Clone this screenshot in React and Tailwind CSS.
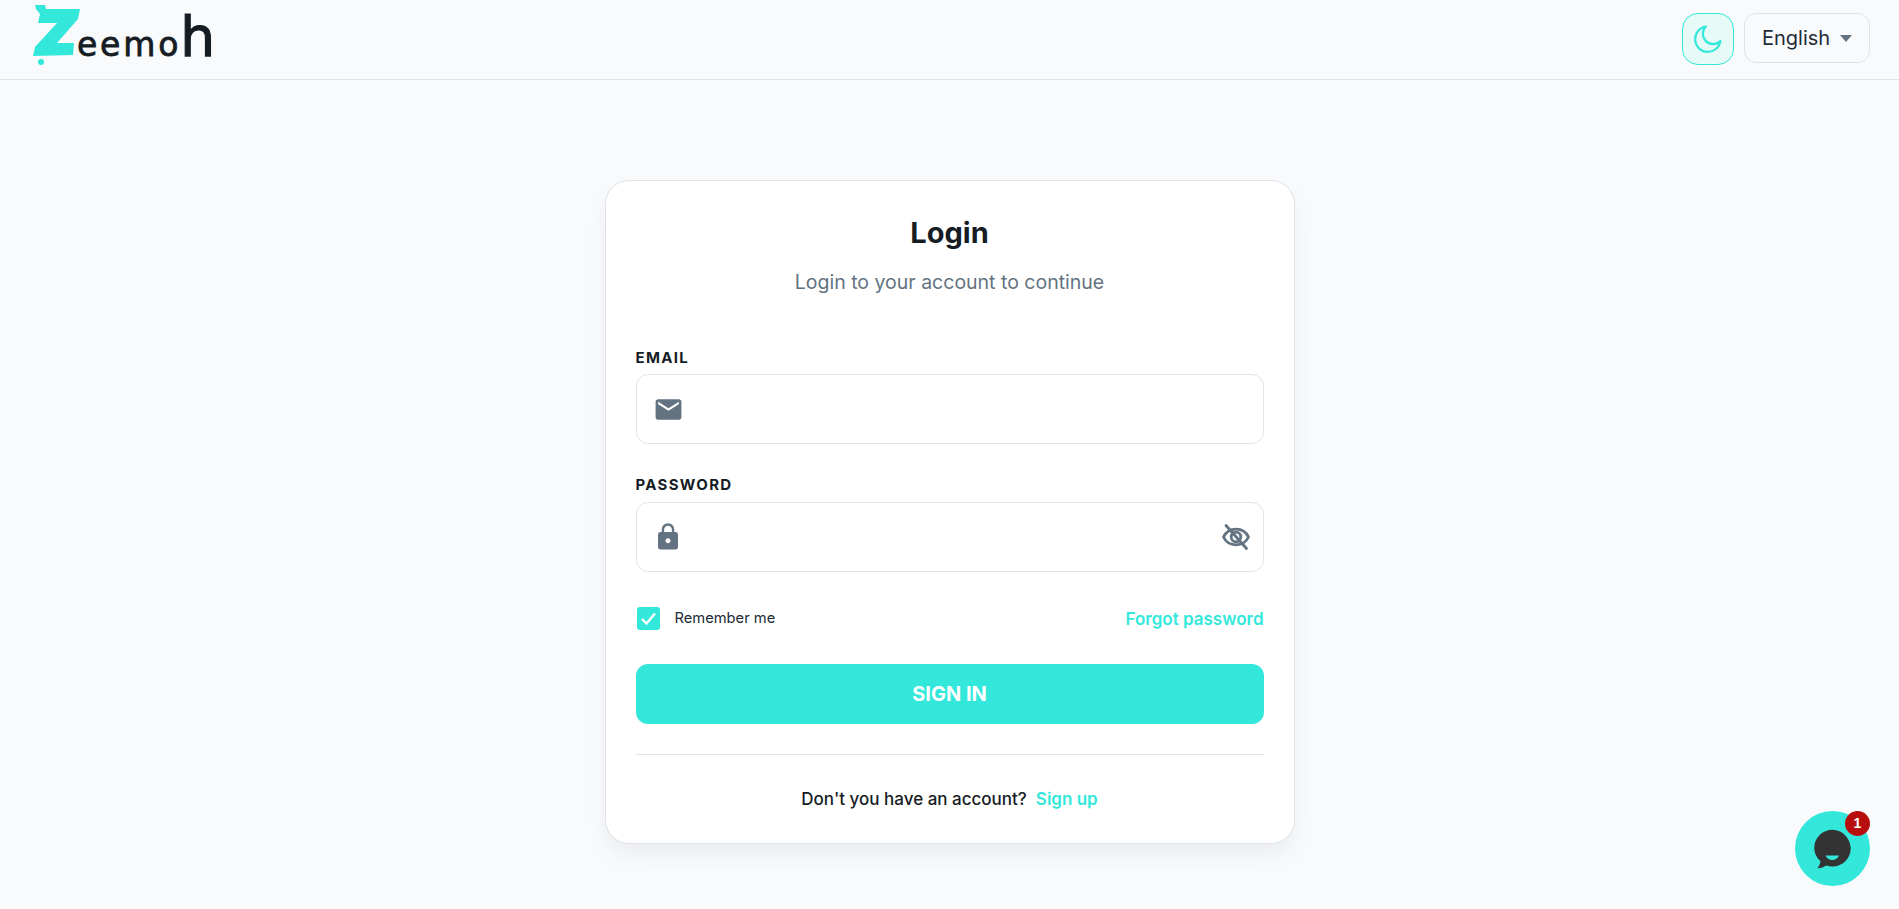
import React from "react";

const font = "font-['Inter','Liberation_Sans',sans-serif]";

function Logo() {
  return (
    <div className="flex items-start">
      <svg width="50" height="66" viewBox="32 3 50 66" className="mt-[3px] shrink-0">
        <polygon fill="#33E8DB" points="35,5 45,5 46,9 80,9 78,19 57,43 74,43 73,55 33,56 35,47 57,23 38,23 40,14 36,9" />
        <circle cx="41" cy="62" r="3" fill="#33E8DB" />
      </svg>
      <div className="flex items-baseline text-[#161c24] font-['DejaVu_Sans',sans-serif] h-[60px] ml-[-5px] mt-[7px]">
        <span className="text-[33px] leading-[60px] tracking-[2.8px] [-webkit-text-stroke:0.8px_#161c24]">eemo</span>
        <span className="text-[55px] leading-[60px] ml-[-1px] [-webkit-text-stroke:1.2px_#161c24]">h</span>
      </div>
    </div>
  );
}

function MailIcon() {
  return (
    <svg width="31" height="31" viewBox="0 0 24 24" fill="#637381">
      <path d="M20 4H4c-1.1 0-1.99.9-1.99 2L2 18c0 1.1.9 2 2 2h16c1.1 0 2-.9 2-2V6c0-1.1-.9-2-2-2zm0 4l-8 5-8-5V6l8 5 8-5v2z" />
    </svg>
  );
}

function LockIcon() {
  return (
    <svg width="30" height="30" viewBox="0 0 24 24" fill="#637381">
      <path d="M18 8h-1V6c0-2.76-2.24-5-5-5S7 3.24 7 6v2H6c-1.1 0-2 .9-2 2v10c0 1.1.9 2 2 2h12c1.1 0 2-.9 2-2V10c0-1.1-.9-2-2-2zm-6 9c-1.1 0-2-.9-2-2s.9-2 2-2 2 .9 2 2-.9 2-2 2zm3.1-9H8.9V6c0-1.71 1.39-3.1 3.1-3.1 1.71 0 3.1 1.39 3.1 3.1v2z" />
    </svg>
  );
}

function EyeOffIcon() {
  return (
    <svg width="30" height="30" viewBox="0 0 30 30" fill="none" stroke="#637381" strokeWidth="2.8" strokeLinecap="round">
      <path d="M2.5 15C5 9.8 9.6 7.2 15 7.2S25 9.8 27.5 15C25 20.2 20.4 22.8 15 22.8S5 20.2 2.5 15Z" />
      <circle cx="15" cy="15" r="4.8" />
      <path d="M5 3.5L25.5 26.5" />
    </svg>
  );
}

export default function App() {
  return (
    <div className={`${font} min-h-[909px] bg-[#f9fafb] text-[#161c24] relative`}>
      <header className="h-[80px] border-b border-[#dfe3e8] flex items-start justify-between pl-[32px] pr-[29px]">
        <Logo />
        <div className="flex items-start gap-[10px] pt-[13px]">
          <button className="w-[52px] h-[52px] rounded-[16px] border border-[#33e8db] bg-[#e6faf8] flex items-center justify-center">
            <svg width="34" height="34" viewBox="0 0 24 24" fill="none" stroke="#33e8db" strokeWidth="1.5" strokeLinejoin="round">
              <path d="M10.5 3.2a7 7 0 0 0 10.3 10.3 9 9 0 1 1-10.3-10.3Z" />
            </svg>
          </button>
          <button className="w-[126px] h-[50px] rounded-[12px] border border-[#dfe3e8] flex items-center pl-[17px] gap-[10px] text-[20px] text-[#212b36]">
            <span>English</span>
            <span className="w-0 h-0 border-l-[6.5px] border-r-[6.5px] border-t-[7px] border-l-transparent border-r-transparent border-t-[#637381]" />
          </button>
        </div>
      </header>

      <main className="flex justify-center pt-[100px]">
        <div className="w-[690px] bg-white border border-[#dfe3e8] rounded-[24px] shadow-[0_12px_24px_-4px_rgba(145,158,171,0.16)] px-[30px] pt-[35px] pb-[32px]">
          <h1 className="text-[29px] leading-[34px] font-bold text-center text-[#161c24]">Login</h1>
          <p className="mt-[19px] text-[19.5px] leading-[26px] text-center text-[#637381]">Login to your account to continue</p>

          <label className="block mt-[53px] mb-[6px] text-[15px] leading-[20px] font-bold tracking-[1.3px] text-[#161c24]">EMAIL</label>
          <div className="h-[70px] rounded-[12px] border border-[#dfe3e8] flex items-center pl-[16px]">
            <MailIcon />
          </div>

          <label className="block mt-[31px] mb-[7px] text-[15px] leading-[20px] font-bold tracking-[1.3px] text-[#161c24]">PASSWORD</label>
          <div className="h-[70px] rounded-[12px] border border-[#dfe3e8] flex items-center justify-between pl-[16px] pr-[12px]">
            <LockIcon />
            <EyeOffIcon />
          </div>

          <div className="mt-[34px] h-[24px] flex items-center justify-between">
            <label className="flex items-center gap-[15px] text-[14.7px] text-[#212b36]">
              <span className="w-[23px] h-[23px] ml-[1px] rounded-[3px] bg-[#33e8db] flex items-center justify-center">
                <svg width="17" height="17" viewBox="0 0 17 17" fill="none" stroke="#fff" strokeWidth="2.4">
                  <path d="M2 9l4.5 4.5L15 3.5" />
                </svg>
              </span>
              Remember me
            </label>
            <a className="text-[17px] leading-[24px] font-semibold text-[#33e8db] translate-y-[1px]">Forgot password</a>
          </div>

          <button className="mt-[34px] w-full h-[60px] rounded-[12px] bg-[#33e8db] text-white text-[20px] font-bold">SIGN IN</button>

          <div className="mt-[30px] border-t border-[#dfe3e8]" />

          <p className="mt-[32px] text-[17px] leading-[24px] font-medium text-center text-[#161c24]">
            Don't you have an account?<a className="ml-[9px] font-semibold text-[#33e8db]">Sign up</a>
          </p>
        </div>
      </main>

      <div className="fixed left-[1795px] top-[811px] w-[75px] h-[75px] rounded-full bg-[#33e8db] flex items-center justify-center">
        <svg width="45" height="45" viewBox="0 0 42 42">
          <path d="M21 3.5C11.6 3.5 4 11 4 20.2c0 5 2.2 9.4 5.7 12.5 0 2-1 4.5-2.7 6.8 3.3-.1 6.2-1.2 8.2-2.6 1.8.6 3.8 1 5.8 1 9.4 0 17-7.5 17-16.8S30.4 3.5 21 3.5Z" fill="#333333" />
          <path d="M14.5 27.5h12.5c-1 2.7-3.4 4.2-6.2 4.2s-5.2-1.5-6.3-4.2Z" fill="#33e8db" />
        </svg>
        <span className="absolute right-[0px] top-[0px] w-[25px] h-[25px] rounded-full bg-[#b80d0d] text-white text-[14px] font-['Liberation_Sans',sans-serif] font-bold flex items-center justify-center">1</span>
      </div>
    </div>
  );
}
